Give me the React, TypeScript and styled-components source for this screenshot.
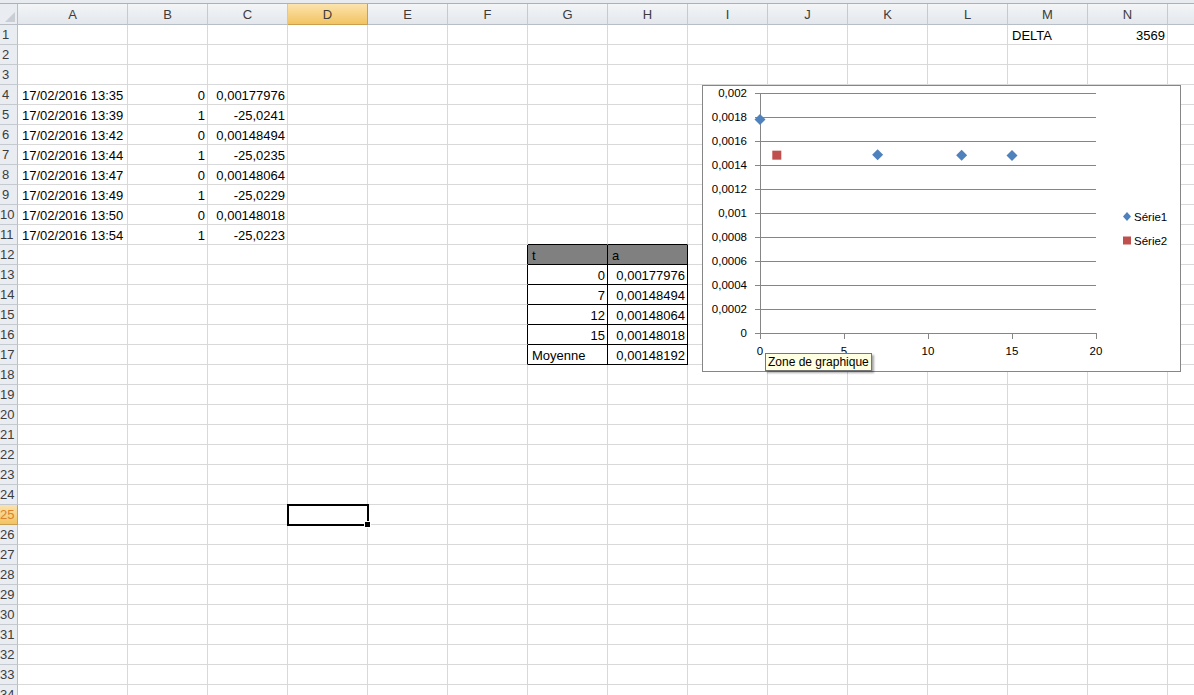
import styled, { createGlobalStyle, css } from 'styled-components'

const GlobalStyle = createGlobalStyle`
  html, body {
    margin: 0;
    padding: 0;
    background: #ffffff;
    overflow: hidden;
  }
  body {
    font-family: "Liberation Sans", Arial, sans-serif;
  }
`

const Page = styled.div`
  position: relative;
  width: 1194px;
  height: 695px;
  overflow: hidden;
  background: #ffffff;
`

const TopStrip = styled.div`
  height: 3px;
  background: #e8ebef;
  border-bottom: 1px solid #a9b1bb;
`

const Sheet = styled.div`
  display: grid;
  grid-template-columns: 18px 110px repeat(14, 80px);
  grid-template-rows: 21px;
  grid-auto-rows: 20px;
  width: 1194px;
  overflow: hidden;
`

const Corner = styled.div`
  box-sizing: border-box;
  background: #e9ecf0;
  border-right: 1px solid #b8bec6;
  border-bottom: 1px solid #b8bec6;
  position: relative;
  &::after {
    content: '';
    position: absolute;
    right: 2px;
    bottom: 2px;
    border-left: 10px solid transparent;
    border-bottom: 10px solid #c9ced5;
  }
`

const selectedHead = css`
  background: linear-gradient(#fbe3ae, #f2c462);
  border-right-color: #c9a04f;
  border-bottom-color: #c9a04f;
`

const ColHead = styled.div<{ $selected?: boolean }>`
  box-sizing: border-box;
  background: linear-gradient(#f3f5f7, #e3e7ec);
  border-right: 1px solid #c5cad1;
  border-bottom: 1px solid #b8bec6;
  color: #3c3c3c;
  font-size: 13px;
  line-height: 21px;
  text-align: center;
  ${p => p.$selected && selectedHead}
`

const RowHead = styled.div<{ $selected?: boolean }>`
  box-sizing: border-box;
  background: #e9ecf0;
  border-right: 1px solid #b8bec6;
  border-bottom: 1px solid #c5cad1;
  color: #3c3c3c;
  font-size: 13px;
  line-height: 20px;
  text-align: center;
  padding-right: 6px;
  white-space: nowrap;
  overflow: hidden;
  ${p => p.$selected && css`
    ${selectedHead}
    color: #d9822b;
  `}
`

const Cell = styled.div<{
  $align?: 'left' | 'right'
  $rightDark?: boolean
  $bottomDark?: boolean
  $fill?: string
  $active?: boolean
}>`
  position: relative;
  box-sizing: border-box;
  border-right: 1px solid ${p => (p.$rightDark ? '#000000' : '#d9d9d9')};
  border-bottom: 1px solid ${p => (p.$bottomDark ? '#000000' : '#d9d9d9')};
  background: ${p => p.$fill || '#ffffff'};
  color: #000000;
  font-size: 13px;
  line-height: 21px;
  padding: 0 2px 0 4px;
  text-align: ${p => p.$align || 'left'};
  white-space: nowrap;
  ${p => p.$active && css`
    &::before {
      content: '';
      position: absolute;
      left: -1px;
      top: -1px;
      right: -2px;
      bottom: -2px;
      border: 2px solid #000000;
      z-index: 2;
    }
    &::after {
      content: '';
      position: absolute;
      right: -4px;
      bottom: -4px;
      width: 5px;
      height: 5px;
      background: #000000;
      border: 1px solid #ffffff;
      z-index: 3;
    }
  `}
`

const ChartBox = styled.div`
  position: absolute;
  left: 702px;
  top: 85px;
  width: 479px;
  height: 287px;
  box-sizing: border-box;
  background: #ffffff;
  border: 1px solid #868686;
`

const Tooltip = styled.div`
  position: absolute;
  left: 765px;
  top: 353px;
  padding: 0 2px;
  height: 16px;
  line-height: 16px;
  background: #ffffe1;
  border: 1px solid #767676;
  box-shadow: 2px 2px 2px rgba(0, 0, 0, 0.35);
  font-size: 12px;
  color: #000000;
  white-space: nowrap;
`

const COLS = ['A', 'B', 'C', 'D', 'E', 'F', 'G', 'H', 'I', 'J', 'K', 'L', 'M', 'N', 'O']
const ROWS = 34

type CellValue = { v: string; align?: 'left' | 'right' }

const data: Record<string, CellValue> = {
  M1: { v: 'DELTA' },
  N1: { v: '3569', align: 'right' },
  G12: { v: 't' },
  H12: { v: 'a' },
  G13: { v: '0', align: 'right' },
  H13: { v: '0,00177976', align: 'right' },
  G14: { v: '7', align: 'right' },
  H14: { v: '0,00148494', align: 'right' },
  G15: { v: '12', align: 'right' },
  H15: { v: '0,00148064', align: 'right' },
  G16: { v: '15', align: 'right' },
  H16: { v: '0,00148018', align: 'right' },
  G17: { v: 'Moyenne' },
  H17: { v: '0,00148192', align: 'right' },
}

const times = ['13:35', '13:39', '13:42', '13:44', '13:47', '13:49', '13:50', '13:54']
const cValues = ['0,00177976', '-25,0241', '0,00148494', '-25,0235', '0,00148064', '-25,0229', '0,00148018', '-25,0223']
times.forEach((t, i) => {
  const r = i + 4
  data['A' + r] = { v: '17/02/2016 ' + t }
  data['B' + r] = { v: String(i % 2), align: 'right' }
  data['C' + r] = { v: cValues[i], align: 'right' }
})

const ACTIVE = { col: 'D', row: 25 }

function inTable(col: string, row: number) {
  return (col === 'G' || col === 'H') && row >= 12 && row <= 17
}

const series1 = [
  [0, 0.00177976],
  [7, 0.00148494],
  [12, 0.00148064],
  [15, 0.00148018],
]
const series2 = [[1, 0.00148192]]

const X0 = 57
const Y0 = 247
const xs = (x: number) => X0 + x * 16.8
const ys = (y: number) => Y0 - y * 120000

function Chart() {
  const yTicks = [0, 0.0002, 0.0004, 0.0006, 0.0008, 0.001, 0.0012, 0.0014, 0.0016, 0.0018, 0.002]
  const xTicks = [0, 5, 10, 15, 20]
  const label = (n: number) => (n === 0 ? '0' : String(parseFloat(n.toFixed(4))).replace('.', ','))
  return (
    <ChartBox>
      <svg width="477" height="285" viewBox="0 0 477 285" fontFamily="Liberation Sans, Arial, sans-serif" fontSize="11.5">
        {yTicks.map(t => (
          <g key={t}>
            <line x1={X0 - 5} x2={393} y1={ys(t) + 0.5} y2={ys(t) + 0.5} stroke="#868686" strokeWidth="1" />
            <text x={44} y={ys(t) + 4} textAnchor="end" fill="#000">{label(t)}</text>
          </g>
        ))}
        <line x1={X0 + 0.5} x2={X0 + 0.5} y1={ys(0.002)} y2={Y0 + 1} stroke="#868686" strokeWidth="1" />
        {xTicks.map(t => (
          <g key={t}>
            <line x1={xs(t) + 0.5} x2={xs(t) + 0.5} y1={Y0} y2={Y0 + 6} stroke="#868686" strokeWidth="1" />
            <text x={xs(t)} y={Y0 + 22} textAnchor="middle" fill="#000">{t}</text>
          </g>
        ))}
        {series1.map(([x, y]) => (
          <path
            key={x}
            d={`M ${xs(x)} ${ys(y) - 5.5} L ${xs(x) + 5.5} ${ys(y)} L ${xs(x)} ${ys(y) + 5.5} L ${xs(x) - 5.5} ${ys(y)} Z`}
            fill="#4f81bd"
          />
        ))}
        {series2.map(([x, y]) => (
          <rect key={x} x={xs(x) - 4.5} y={ys(y) - 4.5} width="9" height="9" fill="#c0504d" />
        ))}
        <path d="M 424 126 L 428 130.5 L 424 135 L 420 130.5 Z" fill="#4f81bd" />
        <text x={431} y={134.5} fill="#000">Série1</text>
        <rect x={420} y={150.5} width="8" height="8" fill="#c0504d" />
        <text x={431} y={158.5} fill="#000">Série2</text>
      </svg>
    </ChartBox>
  )
}

function Row({ row }: { row: number }) {
  return (
    <>
      <RowHead $selected={row === ACTIVE.row}>{row}</RowHead>
      {COLS.map(c => {
        const key = c + row
        const cell = data[key]
        const rightDark = inTable(c, row) || (c === 'F' && row >= 12 && row <= 17)
        const bottomDark = (c === 'G' || c === 'H') && row >= 11 && row <= 17
        const fill = (c === 'G' || c === 'H') && row === 12 ? '#808080' : undefined
        return (
          <Cell
            key={key}
            $align={cell?.align}
            $rightDark={rightDark}
            $bottomDark={bottomDark}
            $fill={fill}
            $active={c === ACTIVE.col && row === ACTIVE.row}
          >
            {cell?.v}
          </Cell>
        )
      })}
    </>
  )
}

function App() {
  const rows = Array.from({ length: ROWS }, (_, i) => i + 1)
  return (
    <Page>
      <GlobalStyle />
      <TopStrip />
      <Sheet>
        <Corner />
        {COLS.map(c => (
          <ColHead key={c} $selected={c === ACTIVE.col}>{c}</ColHead>
        ))}
        {rows.map(r => (
          <Row key={r} row={r} />
        ))}
      </Sheet>
      <Chart />
      <Tooltip>Zone de graphique</Tooltip>
    </Page>
  )
}

export default App
